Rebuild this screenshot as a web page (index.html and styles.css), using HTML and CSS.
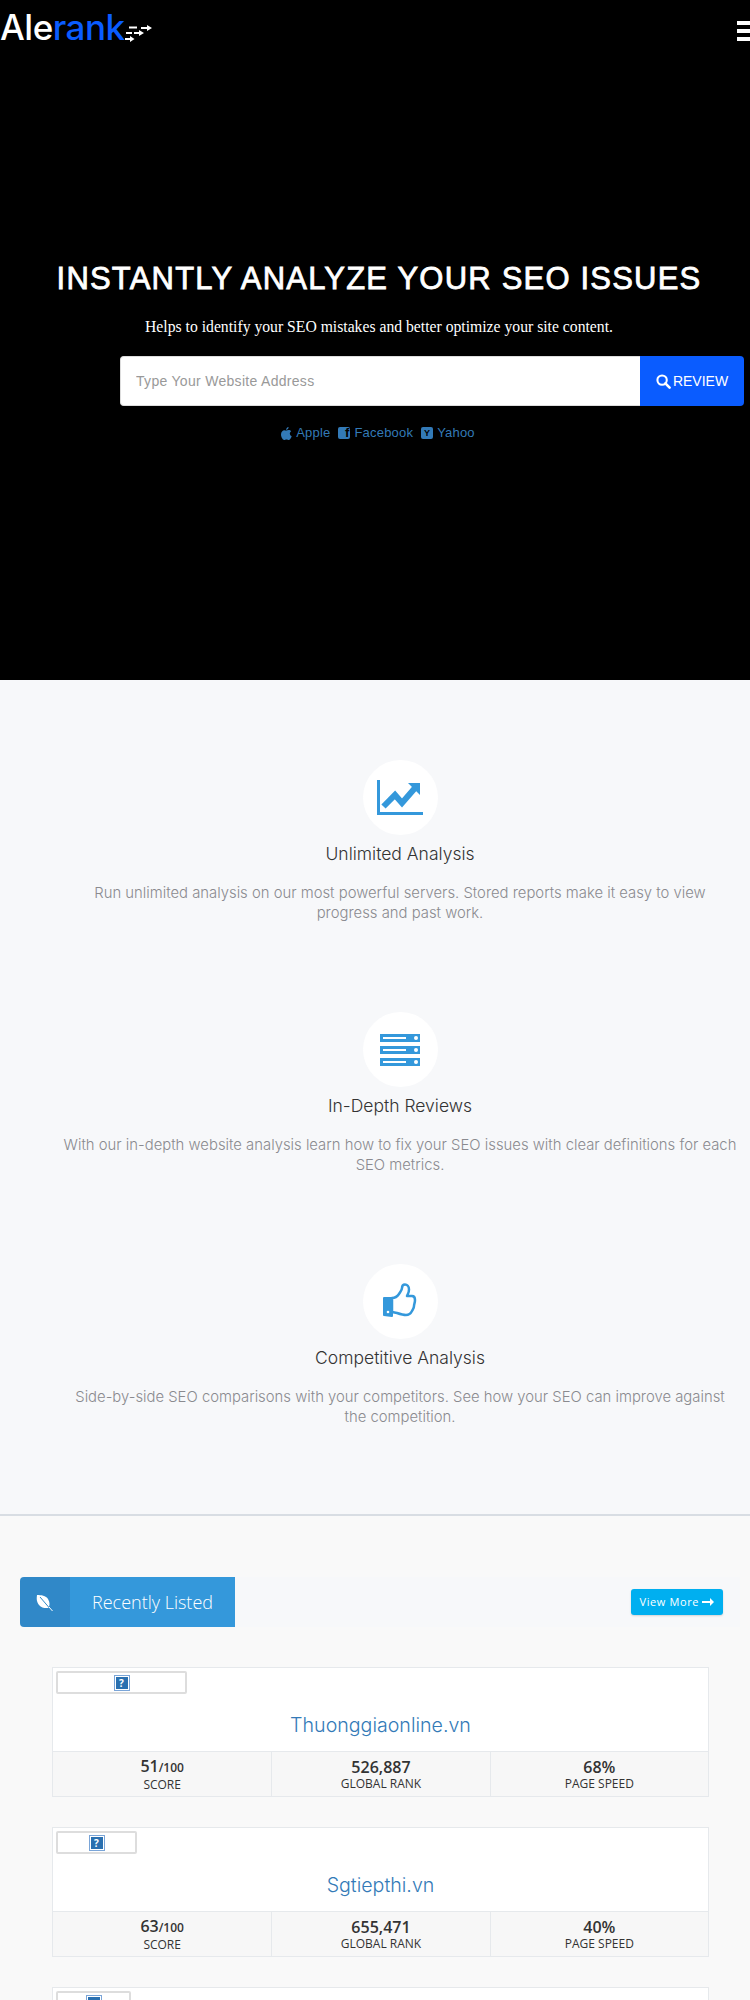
FILE: index.html
```html
<!DOCTYPE html>
<html lang="en">
<head>
  <meta charset="UTF-8" />
  <meta name="viewport" content="width=device-width, initial-scale=1.0"/>
  <title>Alerank</title>
  <link rel="stylesheet" href="styles.css">
</head>
<body>

  <!-- Hero -->
  <div class="hero">
    <div class="nav">
      <a class="logo" href="#">Ale<span class="logo-blue">rank</span>
        <svg class="logo-arrows" width="27" height="17" viewBox="0 0 27 17" fill="#fff">
          <path d="M4 2.500h8M16 3h7M1 8h6M9 8h6M0 14h5" stroke="#fff" stroke-width="2" fill="none"/>
          <path d="M22 0l5 3-5 3zM14 5l5 3-5 3zM5 11l4.500 3-4.500 3z"/>
        </svg>
      </a>
      <div class="burger"><span></span><span></span><span></span></div>
    </div>

    <h1 class="hero-title">INSTANTLY ANALYZE YOUR SEO ISSUES</h1>
    <p class="hero-sub">Helps to identify your SEO mistakes and better optimize your site content.</p>

    <form class="review-form">
      <input class="review-input" type="text" placeholder="Type Your Website Address">
      <button class="review-btn" type="button">
        <svg width="15" height="15" viewBox="0 0 16 16"><circle cx="6.500" cy="6.500" r="5" fill="none" stroke="#fff" stroke-width="2.200"/><path d="M10 10l4.500 4.500" stroke="#fff" stroke-width="2.800" stroke-linecap="round"/></svg>
        REVIEW
      </button>
    </form>

    <div class="examples">
      <a href="#">
        <svg width="11" height="13" viewBox="0 0 11 13"><path d="M7.600 0c.1 1.500-1 2.800-2.500 2.900C5 1.500 6.200.2 7.600 0zM5.400 3.500c.6 0 1.300-.5 2.300-.5.9 0 1.900.4 2.500 1.300-2 1.200-1.700 4 .5 4.900-.5 1.500-1.800 3.800-3 3.800-.9 0-1.200-.6-2.200-.6s-1.400.6-2.200.6C1.500 13 0 9.800 0 7.500 0 4.800 1.700 3.200 3.300 3.200c.9 0 1.600.3 2.100.3z" fill="#337ab7"/></svg>
        Apple
      </a>
      <a href="#"><span class="square-icon square-fb">f</span> Facebook</a>
      <a href="#"><span class="square-icon">Y</span> Yahoo</a>
    </div>
  </div>

  <!-- Features -->
  <div class="features">
    <div class="feature">
      <div class="feature-icon">
        <svg width="46" height="35" viewBox="0 0 46 35" fill="#3498db">
          <rect x="0" y="0" width="3" height="35"/>
          <rect x="0" y="32" width="46" height="3"/>
          <path d="M6.500 26.500L18 15l7 8L38 8" fill="none" stroke="#3498db" stroke-width="6"/>
          <path d="M31 3h12v12z"/>
        </svg>
      </div>
      <h3>Unlimited Analysis</h3>
      <p class="narrow">Run unlimited analysis on our most powerful servers. Stored reports make it easy to view progress and past work.</p>
    </div>

    <div class="feature">
      <div class="feature-icon">
        <svg width="40" height="32" viewBox="0 0 40 32">
          <rect x="0" y="0" width="40" height="8" fill="#3498db"/>
          <rect x="0" y="12" width="40" height="8" fill="#3498db"/>
          <rect x="0" y="24" width="40" height="8" fill="#3498db"/>
          <rect x="3" y="3" width="23" height="2" fill="#fff"/>
          <rect x="3" y="15" width="23" height="2" fill="#fff"/>
          <rect x="3" y="27" width="23" height="2" fill="#fff"/>
          <circle cx="36" cy="4" r="2" fill="#fff"/>
          <circle cx="36" cy="16" r="2" fill="#fff"/>
          <circle cx="36" cy="28" r="2" fill="#fff"/>
        </svg>
      </div>
      <h3>In-Depth Reviews</h3>
      <p>With our in-depth website analysis learn how to fix your SEO issues with clear definitions for each SEO metrics.</p>
    </div>

    <div class="feature">
      <div class="feature-icon">
        <svg width="34" height="37" viewBox="0 0 34 37">
          <path d="M1 15h8v18l-8-1z" fill="#3498db" stroke="#3498db" stroke-width="2" stroke-linejoin="round"/>
          <path d="M9 15c3 0 5-1 7-4s3-4 3-6 1-3.500 3-3.500 4 2 4 5-1 4-2 6.500h5c2 0 3 2 3 4 0 3-1 4-1 6s-1 3-2 5-3 4-6 4-6-1-9-2l-5-1z" fill="#fff" stroke="#3498db" stroke-width="2.500" stroke-linejoin="round"/>
          <circle cx="5" cy="29" r="1.300" fill="#fff"/>
        </svg>
      </div>
      <h3>Competitive Analysis</h3>
      <p class="narrow">Side-by-side SEO comparisons with your competitors. See how your SEO can improve against the competition.</p>
    </div>
  </div>

  <!-- Recently listed -->
  <div class="listing">
    <div class="listing-head">
      <div class="head-icon">
        <svg width="17" height="17" viewBox="0 0 17 17">
          <path d="M1 1c4 0 9 .500 11 4s2 6 .500 9c-3 0-7 .500-9.500-3S.500 5 1 1z" fill="#fff"/>
          <path d="M4 3l12 14" stroke="#3088c8" stroke-width="1"/>
          <path d="M13 13l3.500 4" stroke="#fff" stroke-width="1"/>
        </svg>
      </div>
      <h2 class="head-title">Recently Listed</h2>
      <a class="view-more" href="#">View More
        <svg width="12" height="8" viewBox="0 0 12 8"><path d="M0 3h8V0l4 4-4 4V5H0z" fill="#fff"/></svg>
      </a>
    </div>

    <div class="site-card">
      <div class="thumb thumb-a"><span class="broken">?</span></div>
      <h4 class="site-name"><a href="#">Thuonggiaonline.vn</a></h4>
      <div class="stats">
        <div class="stat"><strong>51<small>/100</small></strong><span>SCORE</span></div>
        <div class="stat"><strong>526,887</strong><span>GLOBAL RANK</span></div>
        <div class="stat"><strong>68%</strong><span>PAGE SPEED</span></div>
      </div>
    </div>

    <div class="site-card">
      <div class="thumb thumb-b"><span class="broken">?</span></div>
      <h4 class="site-name"><a href="#">Sgtiepthi.vn</a></h4>
      <div class="stats">
        <div class="stat"><strong>63<small>/100</small></strong><span>SCORE</span></div>
        <div class="stat"><strong>655,471</strong><span>GLOBAL RANK</span></div>
        <div class="stat"><strong>40%</strong><span>PAGE SPEED</span></div>
      </div>
    </div>

    <div class="site-card">
      <div class="thumb thumb-c"><span class="broken"></span></div>
    </div>
  </div>

</body>
</html>
```

FILE: styles.css
```css
/* Base */
html {
  height: 2000px;
  overflow: hidden;
}
body {
  margin: 0;
  font-family: "Open Sans", sans-serif;
  color: #333;
  background-color: #f9f9f9;
}
a {
  text-decoration: none;
}

/* Hero */
.hero {
  height: 680px;
  background: #000;
  overflow: hidden;
}
.nav {
  height: 60px;
  display: flex;
  justify-content: space-between;
  align-items: flex-start;
}
.logo {
  display: flex;
  align-items: flex-end;
  margin-top: 9px;
  font-family: Inter, sans-serif;
  font-size: 35px;
  line-height: 36px;
  font-weight: 500;
  letter-spacing: -0.5px;
  color: #fff;
}
.logo-blue {
  color: #0a5cff;
}
.logo-arrows {
  margin-bottom: 3px;
}
.burger {
  width: 13px;
  margin-top: 21px;
  display: flex;
  flex-direction: column;
  gap: 4px;
}
.burger span {
  height: 4px;
  background: #fff;
}
.hero-title {
  margin: 199px 0 0;
  padding-left: 8px;
  text-align: center;
  font-family: "Liberation Sans", Arial, sans-serif;
  font-size: 31px;
  line-height: 40px;
  font-weight: 400;
  letter-spacing: 1.2px;
  color: #fff;
  -webkit-text-stroke: 0.8px #fff;
}
.hero-sub {
  margin: 18px 0 0;
  padding-left: 8px;
  text-align: center;
  font-family: "Liberation Serif", serif;
  font-size: 15.700px;
  line-height: 20px;
  color: #fff;
}
.review-form {
  display: flex;
  margin: 19px 6px 0 120px;
  height: 50px;
}
.review-input {
  flex: 1;
  min-width: 0;
  box-sizing: border-box;
  border: 1px solid #ddd;
  border-right: 0;
  border-radius: 4px 0 0 4px;
  padding: 0 15px;
  font-family: "Liberation Sans", Arial, sans-serif;
  font-size: 14px;
  letter-spacing: 0.3px;
  background: #fff;
}
.review-input::placeholder {
  color: #999;
}
.review-btn {
  width: 104px;
  border: 0;
  padding: 0;
  border-radius: 0 4px 4px 0;
  background: #0a5cff;
  color: #fff;
  font-family: "Liberation Sans", Arial, sans-serif;
  font-size: 14px;
  display: flex;
  align-items: center;
  justify-content: center;
  gap: 2px;
}
.examples {
  margin-top: 18px;
  padding-left: 6px;
  display: flex;
  justify-content: center;
  gap: 8px;
  font-family: "Liberation Sans", Arial, sans-serif;
  font-size: 13px;
  line-height: 18px;
  letter-spacing: 0.2px;
}
.examples a {
  color: #337ab7;
  display: flex;
  align-items: center;
  gap: 4px;
}
.square-icon {
  width: 12px;
  height: 12px;
  border-radius: 2px;
  background: #337ab7;
  color: #000;
  font-size: 9px;
  line-height: 12px;
  font-weight: bold;
  text-align: center;
}
.square-fb {
  font-size: 13px;
  text-align: right;
  padding-right: 1px;
  box-sizing: border-box;
}

/* Features */
.features {
  height: 836px;
  box-sizing: border-box;
  padding: 80px 0 0 50px;
  background: #f7f8fa;
  border-bottom: 2px solid #d8dde3;
}
.feature {
  height: 252px;
  text-align: center;
}
.feature-icon {
  width: 75px;
  height: 75px;
  margin: 0 auto;
  border-radius: 50%;
  background: #fff;
  display: flex;
  align-items: center;
  justify-content: center;
}
.feature h3 {
  margin: 7px 0 0;
  font-family: Inter, sans-serif;
  font-size: 17.500px;
  line-height: 24px;
  font-weight: 300;
  color: #333;
}
.feature p {
  margin: 17px 0 0;
  font-family: Inter, sans-serif;
  font-size: 14.850px;
  line-height: 20px;
  font-weight: 300;
  color: #8a8a8f;
}
.feature p.narrow {
  margin-left: 20px;
  margin-right: 20px;
}

/* Listing */
.listing {
  padding: 61px 10px 0 20px;
}
.listing-head {
  height: 50px;
  display: flex;
  align-items: center;
  background: #f7f8fa;
}
.head-icon {
  width: 50px;
  height: 50px;
  border-radius: 4px 0 0 4px;
  background: #3088c8;
  display: flex;
  align-items: center;
  justify-content: center;
  box-sizing: border-box;
  padding-right: 2px;
}
.head-title {
  width: 165px;
  height: 50px;
  margin: 0;
  background: #3498db;
  color: #fff;
  font-size: 18px;
  line-height: 50px;
  font-weight: 300;
  text-align: center;
}
.view-more {
  margin-left: auto;
  margin-right: 17px;
  width: 92px;
  height: 26px;
  box-sizing: border-box;
  border-radius: 3px;
  background: #00aff0;
  color: #fff;
  font-size: 11px;
  line-height: 26px;
  letter-spacing: 0.6px;
  text-align: center;
  box-shadow: 0 1px 2px rgba(0, 0, 0, 0.15);
}
.site-card {
  width: 657px;
  height: 130px;
  box-sizing: border-box;
  margin: 0 0 30px 32px;
  border: 1px solid #e6e9ec;
  background: #fff;
  position: relative;
}
.listing-head + .site-card {
  margin-top: 40px;
}
.thumb {
  height: 23px;
  margin: 3px 0 0 3px;
  box-sizing: border-box;
  border: 2px solid #ddd;
  border-radius: 2px;
  display: flex;
  align-items: center;
  justify-content: center;
}
.thumb-a { width: 131px; }
.thumb-b { width: 81px; }
.thumb-c { width: 75px; }
.broken {
  width: 16px;
  height: 16px;
  box-sizing: border-box;
  border: 1px solid #7aa5d8;
  background: #2a70b0;
  outline: 1px solid #fff;
  outline-offset: -2px;
  color: #fff;
  font-size: 10px;
  line-height: 14px;
  font-weight: bold;
  text-align: center;
}
.site-name {
  margin: 17px 0 0;
  text-align: center;
  font-family: Inter, sans-serif;
  font-size: 19.600px;
  line-height: 28px;
  font-weight: 300;
}
.site-name a {
  color: #337ab7;
}
.stats {
  position: absolute;
  left: 0;
  right: 0;
  bottom: 0;
  height: 44px;
  display: grid;
  grid-template-columns: repeat(3, 1fr);
  background: #f7f7f7;
  border-top: 1px solid #e6e9ec;
}
.stat {
  display: flex;
  flex-direction: column;
  align-items: center;
  justify-content: center;
  padding-top: 1px;
  border-left: 1px solid #e6e9ec;
}
.stat:first-child {
  border-left: 0;
}
.stat strong {
  font-size: 16px;
  line-height: 18px;
  font-weight: 600;
  color: #333;
}
.stat small {
  font-size: 12px;
}
.stat span {
  font-size: 12px;
  line-height: 16px;
  color: #333;
}
```
